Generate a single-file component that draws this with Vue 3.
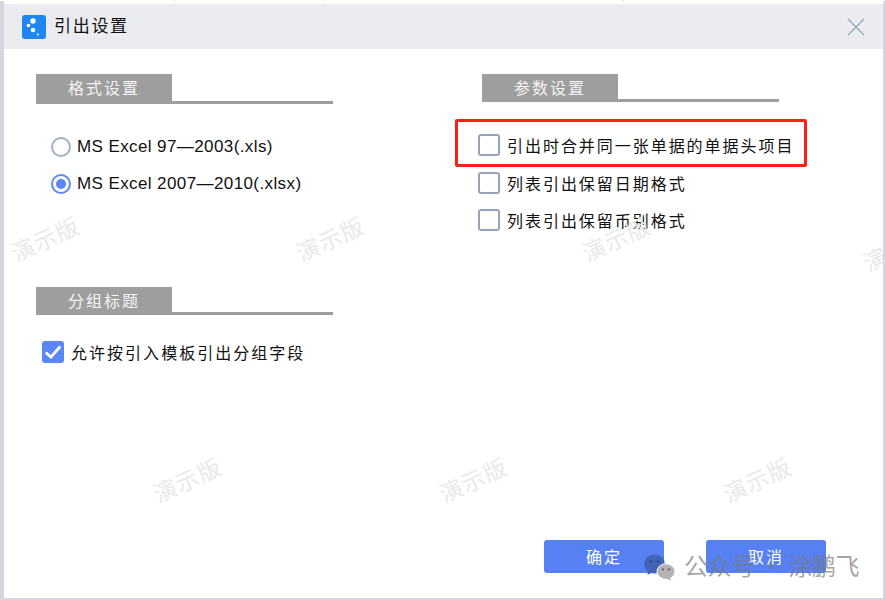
<template>
  <div class="page">
    <div class="ticks"></div>
    <div class="dialog">
      <header class="titlebar">
        <div class="title-left">
          <svg class="logo" width="24" height="24" viewBox="0 0 24 24">
            <rect width="24" height="24" rx="3" fill="#1f86f3" />
            <circle cx="11" cy="6" r="2.7" fill="#fff" />
            <circle cx="6.5" cy="10.5" r="1.8" fill="#fff" />
            <circle cx="11" cy="15" r="2.3" fill="#fff" />
            <circle cx="16" cy="19.5" r="1" fill="#fff" />
          </svg>
          <span class="title">引出设置</span>
        </div>
        <svg class="close" width="18" height="18" viewBox="0 0 18 18">
          <path d="M1 1 L17 17 M17 1 L1 17" stroke="#9aa4ba" stroke-width="1.3" fill="none" />
        </svg>
      </header>

      <div class="body">
        <div class="columns">
          <div class="col-left">
            <section class="group">
              <div class="group-head tall"><span class="group-label">格式设置</span></div>
              <div class="radios">
                <label v-for="r in radios" :key="r.text" class="radio-row">
                  <span class="radio" :class="{ on: r.on }"></span>
                  <span class="latin">{{ r.text }}</span>
                </label>
              </div>
            </section>
            <section class="group second">
              <div class="group-head"><span class="group-label">分组标题</span></div>
              <label class="check-row allow">
                <span class="box checked">
                  <svg width="16" height="14" viewBox="0 0 16 14">
                    <path d="M0.8 7.5 L6 12 L15.2 1.5" stroke="#fff" stroke-width="2.8" fill="none" />
                  </svg>
                </span>
                <span class="cjk">允许按引入模板引出分组字段</span>
              </label>
            </section>
          </div>

          <div class="col-right">
            <section class="group">
              <div class="group-head"><span class="group-label">参数设置</span></div>
              <div class="checks">
                <label v-for="c in checks" :key="c" class="check-row">
                  <span class="box"></span>
                  <span class="cjk right">{{ c }}</span>
                </label>
              </div>
            </section>
          </div>
        </div>

        <footer class="footer">
          <button class="btn">确定</button>
          <button class="btn">取消</button>
        </footer>
      </div>

      <span v-for="w in marks" :key="w.x + '-' + w.y" class="mark" :style="{ left: w.x + 'px', top: w.y + 'px' }">演示版</span>
    </div>

    <!-- things laid over the screenshot -->
    <div class="redbox"></div>
    <div class="wechat">
      <svg width="32" height="27" viewBox="0 0 32 27">
        <ellipse cx="10.5" cy="10" rx="10.5" ry="9.5" fill="#4264b4" />
        <path d="M4 16 L3.5 21 L9 18 Z" fill="#4264b4" />
        <circle cx="7" cy="7.5" r="1.4" fill="#2f4a8f" />
        <circle cx="14" cy="7.5" r="1.4" fill="#2f4a8f" />
        <ellipse cx="22" cy="17.5" rx="9" ry="7.8" fill="#b4b4b4" stroke="#fff" stroke-width="1" />
        <path d="M25 23 L27.5 26.5 L21 24.5 Z" fill="#b4b4b4" />
        <circle cx="19" cy="15.5" r="1.2" fill="#6f6f6f" />
        <circle cx="25" cy="15.5" r="1.2" fill="#6f6f6f" />
      </svg>
      <span class="wechat-text">公众号 · 涂鹏飞</span>
    </div>
  </div>
</template>

<script setup>
const radios = [
  { text: 'MS Excel 97—2003(.xls)', on: false },
  { text: 'MS Excel 2007—2010(.xlsx)', on: true },
]
const checks = [
  '引出时合并同一张单据的单据头项目',
  '列表引出保留日期格式',
  '列表引出保留币别格式',
]
// watermark spots, relative to the dialog
const marks = [
  { x: 3, y: 223 }, { x: 288, y: 223 }, { x: 574, y: 223 }, { x: 855, y: 233 },
  { x: 145, y: 464 }, { x: 431, y: 464 }, { x: 715, y: 464 },
]
</script>

<style>
html, body {
  margin: 0;
  background: #fff;
}
</style>

<style scoped>
.page {
  position: relative;
  width: 885px;
  height: 600px;
  overflow: hidden;
  font-family: "Noto Sans CJK SC", "Liberation Sans", sans-serif;
  padding: 1px 2px 2px 4px;
  box-sizing: border-box;
  background: #d5d6de;
}

.ticks {
  position: absolute;
  left: 0;
  top: 0;
  width: 100%;
  height: 1px;
  background: repeating-linear-gradient(90deg, #fff 0, #fff 148.5px, #d5d6de 148.5px, #d5d6de 149.5px);
  background-position: 26px 0;
}

.dialog {
  position: relative;
  height: 100%;
  overflow: hidden;
  display: flex;
  flex-direction: column;
  background: #fff;
}

.titlebar {
  height: 45px;
  flex: none;
  margin-top: 3px;
  background: #ebecf0;
  display: flex;
  align-items: center;
  justify-content: space-between;
  padding: 0 18px 0 18px;
}

.title-left {
  display: flex;
  align-items: center;
  gap: 8px;
}

.logo {
  display: block;
}

.title {
  font-size: 17px;
  letter-spacing: 1.7px;
  color: #111;
  padding-bottom: 4px;
}

.close {
  display: block;
}

.body {
  flex: 1;
  display: flex;
  flex-direction: column;
  padding: 25px 57px 25px 32px;
  min-height: 0;
}

.columns {
  flex: 1;
  display: flex;
}

.col-left {
  width: 446px;
}

.col-right {
  width: 297px;
}

.group-head {
  border-bottom: 3px solid #9e9e9e;
  width: 297px;
  height: 25px;
}

.group-head.tall {
  height: 27px;
}

.group-label {
  display: block;
  width: 136px;
  height: calc(100% + 3px);
  background: #9e9e9e;
  color: #f4f4f4;
  font-size: 16px;
  letter-spacing: 2px;
  text-align: center;
  line-height: 26px;
}

.radios {
  margin-top: 31px;
  margin-left: 15px;
  display: flex;
  flex-direction: column;
  gap: 13px;
}

.radio-row {
  display: flex;
  align-items: center;
  gap: 6px;
  height: 24px;
}

.radio {
  width: 20px;
  height: 20px;
  box-sizing: border-box;
  border: 2px solid #9fb0c2;
  border-radius: 50%;
  background: #fff;
  position: relative;
}

.radio.on {
  border-color: #5b86f5;
}

.radio.on::after {
  content: "";
  position: absolute;
  left: 3px;
  top: 3px;
  width: 10px;
  height: 10px;
  border-radius: 50%;
  background: #5b86f5;
}

.latin {
  font-family: "Liberation Sans", sans-serif;
  font-size: 17px;
  letter-spacing: 0.4px;
  color: #111;
}

.group.second {
  margin-top: 91px;
}

.checks {
  margin-top: 32px;
  margin-left: -4px;
  display: flex;
  flex-direction: column;
  gap: 15.5px;
}

.check-row {
  display: flex;
  align-items: center;
  gap: 7px;
  height: 22px;
}

.check-row.allow {
  margin-top: 26px;
  margin-left: 6px;
}

.box {
  width: 22px;
  height: 22px;
  flex: none;
  box-sizing: border-box;
  border: 2px solid #98a2b8;
  border-radius: 3px;
  background: #fff;
  display: flex;
  align-items: center;
  justify-content: center;
}

.box.checked {
  background: #5b86f5;
  border-color: #5b86f5;
}

.cjk {
  font-size: 16px;
  letter-spacing: 2.03px;
  color: #111;
  white-space: nowrap;
}

.cjk.right {
  letter-spacing: 1.96px;
}

.footer {
  flex: none;
  display: flex;
  justify-content: flex-end;
  gap: 42px;
}

.btn {
  width: 120px;
  height: 33px;
  border: none;
  border-radius: 3px;
  background: #5781f2;
  color: #fff;
  font-family: inherit;
  font-size: 16px;
  letter-spacing: 2px;
  padding: 0 0 2px;
}

.redbox {
  position: absolute;
  left: 455px;
  top: 119px;
  width: 352px;
  height: 48px;
  box-sizing: border-box;
  border: 3px solid #fb1f14;
  border-radius: 2px;
}

.mark {
  position: absolute;
  width: 76px;
  text-align: center;
  font-size: 23px;
  letter-spacing: 1px;
  line-height: 28px;
  color: #e9e9e9;
  transform: rotate(-25deg);
  white-space: nowrap;
}

.wechat {
  position: absolute;
  left: 644px;
  top: 552px;
  display: flex;
  align-items: center;
  gap: 8px;
  color: rgba(120, 120, 120, 0.68);
}

.wechat svg {
  display: block;
}

.wechat-text {
  font-size: 24px;
  letter-spacing: -0.4px;
  line-height: 26px;
  padding-bottom: 4px;
  white-space: nowrap;
}
</style>
